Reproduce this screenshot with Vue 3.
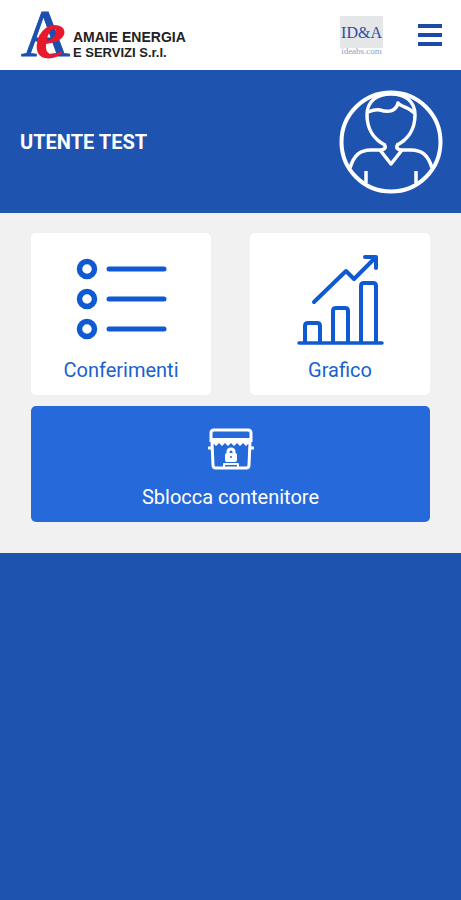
<template>
  <div class="app">
    <header class="topbar">
      <a href="#" class="brand" aria-label="Amaie Energia e Servizi">
        <svg class="brand-mark" viewBox="0 0 50 70" aria-hidden="true">
          <text x="0" y="56" class="mark-a">A</text>
          <text x="14" y="58" class="mark-e">e</text>
        </svg>
        <span class="brand-text">
          <span class="brand-line">AMAIE ENERGIA</span>
          <span class="brand-line brand-line-small">E SERVIZI S.r.l.</span>
        </span>
      </a>
      <div class="topbar-right">
        <a href="#" class="partner">
          <span class="partner-name">ID&amp;A</span>
          <span class="partner-site">ideabs.com</span>
        </a>
        <button type="button" class="menu-btn" aria-label="Menu">
          <span class="menu-bar"></span>
          <span class="menu-bar"></span>
          <span class="menu-bar"></span>
        </button>
      </div>
    </header>

    <section class="user">
      <h1 class="user-name">{{ userName }}</h1>
      <svg class="avatar" viewBox="0 0 104 104" fill="none" aria-hidden="true">
        <circle cx="52" cy="52" r="49.5" stroke-width="4" />
        <path d="M46 55 C36 50 28 40 28 25 C28 11 38 4 52 4 C66 4 76 11 76 25 C76 40 68 50 58 55" />
        <path d="M45 54 C48 58 45 60 41 60 H32 C21 60 15 65 11 78" />
        <path d="M59 54 C56 58 59 60 63 60 H72 C83 60 89 65 93 78" />
        <path d="M41 60 L52 74 L63 60" />
        <path d="M29 22 C34 20 37 19 41 20 C50 23 57 21 59 13 C62 17 70 17 75 23" />
        <path d="M27 81 V93 M77 81 V93" />
      </svg>
    </section>

    <main class="actions">
      <div class="cards">
        <button type="button" class="card">
          <svg class="card-icon" viewBox="0 0 92 92" fill="none" aria-hidden="true">
            <template v-for="y in listRows" :key="y">
              <circle cx="12" :cy="y" r="7.5" stroke-width="5.5" />
              <path :d="`M34 ${y} H89`" stroke-width="5" />
            </template>
          </svg>
          <span class="card-label">Conferimenti</span>
        </button>
        <button type="button" class="card">
          <svg class="card-icon" viewBox="0 0 92 92" fill="none" aria-hidden="true">
            <path d="M5 90 H88" stroke-width="3.5" />
            <path d="M11 89 V73 Q11 70 14 70 H23 Q26 70 26 73 V89" />
            <path d="M39 89 V58 Q39 55 42 55 H51 Q54 55 54 58 V89" />
            <path d="M67 89 V33 Q67 30 70 30 H79 Q82 30 82 33 V89" />
            <path d="M20 49 L52 18 L60 26 L81 5 M71 4 H82 V15" />
          </svg>
          <span class="card-label">Grafico</span>
        </button>
      </div>
      <button type="button" class="unlock">
        <svg class="unlock-icon" viewBox="0 0 46 42" fill="none" aria-hidden="true">
          <path d="M3 14 V5 Q3 2 6 2 H40 Q43 2 43 5 V14" />
          <path class="solid" d="M3 10 H43 V16 H40 L38 18 L35 15 L32 18 L29 15 L26 18 L23 15 L20 18 L17 15 L14 18 L11 15 L8 18 L6 16 H3 Z" />
          <path d="M4 14 L5 37 Q5 40 8 40 H38 Q41 40 41 37 L42 14" />
          <path d="M0 20 H4 M42 20 H46" />
          <path d="M20 27 V24 Q20 21 23 21 Q26 21 26 24 V27" />
          <rect class="solid" x="17" y="25" width="12" height="9" rx="2" />
          <path d="M16 41 V36 H30 V41" stroke-width="2" />
          <circle class="hole" cx="23" cy="29" r="1" />
        </svg>
        <span class="unlock-label">Sblocca contenitore</span>
      </button>
    </main>
  </div>
</template>

<script setup>
import { ref } from 'vue'

const userName = ref('UTENTE TEST')

// vertical centres of the rows in the list icon
const listRows = [16, 46, 76]
</script>

<style>
body { margin: 0; background: #1e54b0; }
</style>

<style scoped>
.app { min-height: 100vh; background: #1e54b0; font-family: Roboto, "Liberation Sans", sans-serif; }
button { font-family: inherit; border: 0; padding: 0; cursor: pointer; }
a { text-decoration: none; }

/* header */
.topbar { display: flex; align-items: center; justify-content: space-between; box-sizing: border-box; height: 70px; padding: 0 19px 0 21px; background: #fff; }
.brand { display: flex; align-items: center; gap: 2px; color: #222; font-family: "Liberation Sans", sans-serif; }
.brand-mark { width: 50px; height: 70px; overflow: visible; }
.mark-a { font: 68px "Liberation Serif", serif; fill: #1c50ae; stroke: #1c50ae; }
.mark-e { font: italic bold 70px "Liberation Serif", serif; fill: #e8192c; }
.brand-text { display: flex; flex-direction: column; padding-top: 19px; }
.brand-line { font-size: 14px; line-height: 15px; font-weight: bold; white-space: nowrap; }
.brand-line-small { font-size: 13px; }
.topbar-right { display: flex; align-items: center; gap: 35px; }
.partner { display: flex; flex-direction: column; align-items: center; width: 43px; }
.partner-name { width: 100%; height: 32px; background: #e4e6e8; color: #2c4fa0; font: 16px/34px "Liberation Serif", serif; text-align: center; }
.partner-site { color: #8a9cce; font: 9px/6px "Liberation Serif", serif; }
.menu-btn { display: flex; flex-direction: column; gap: 5px; background: none; }
.menu-bar { width: 24px; height: 4px; background: #1c4ba6; }

/* user band */
.user { display: flex; align-items: center; justify-content: space-between; box-sizing: border-box; height: 143px; padding: 0 18px 0 20px; color: #fff; }
.user-name { margin: 0; font-size: 20px; line-height: 24px; font-weight: 700; }
.avatar { width: 104px; height: 104px; stroke: #fff; stroke-width: 3.5; stroke-linejoin: round; }

/* actions */
.actions { display: flex; flex-direction: column; gap: 11px; padding: 20px 31px 31px; background: #f1f1f1; }
.cards { display: grid; grid-template-columns: 1fr 1fr; gap: 39px; }
.card { display: flex; flex-direction: column; align-items: center; gap: 13px; padding: 20px 0 13px; border-radius: 5px; background: #fff; color: #1b5fd0; }
.card-icon { width: 92px; height: 92px; stroke: #0f5ad2; stroke-width: 4; stroke-linecap: round; stroke-linejoin: round; }
.card-label { font-size: 20px; line-height: 24px; font-weight: 400; }
.unlock { display: flex; flex-direction: column; align-items: center; gap: 15px; padding: 22px 0 13px; border-radius: 5px; background: #2569da; color: #fff; }
.unlock-icon { width: 46px; height: 42px; stroke: #fff; stroke-width: 3; stroke-linejoin: round; }
.unlock-icon .solid { fill: #fff; stroke: none; }
.unlock-icon .hole { fill: #2569da; stroke: none; }
.unlock-label { font-size: 20px; line-height: 24px; }
</style>
